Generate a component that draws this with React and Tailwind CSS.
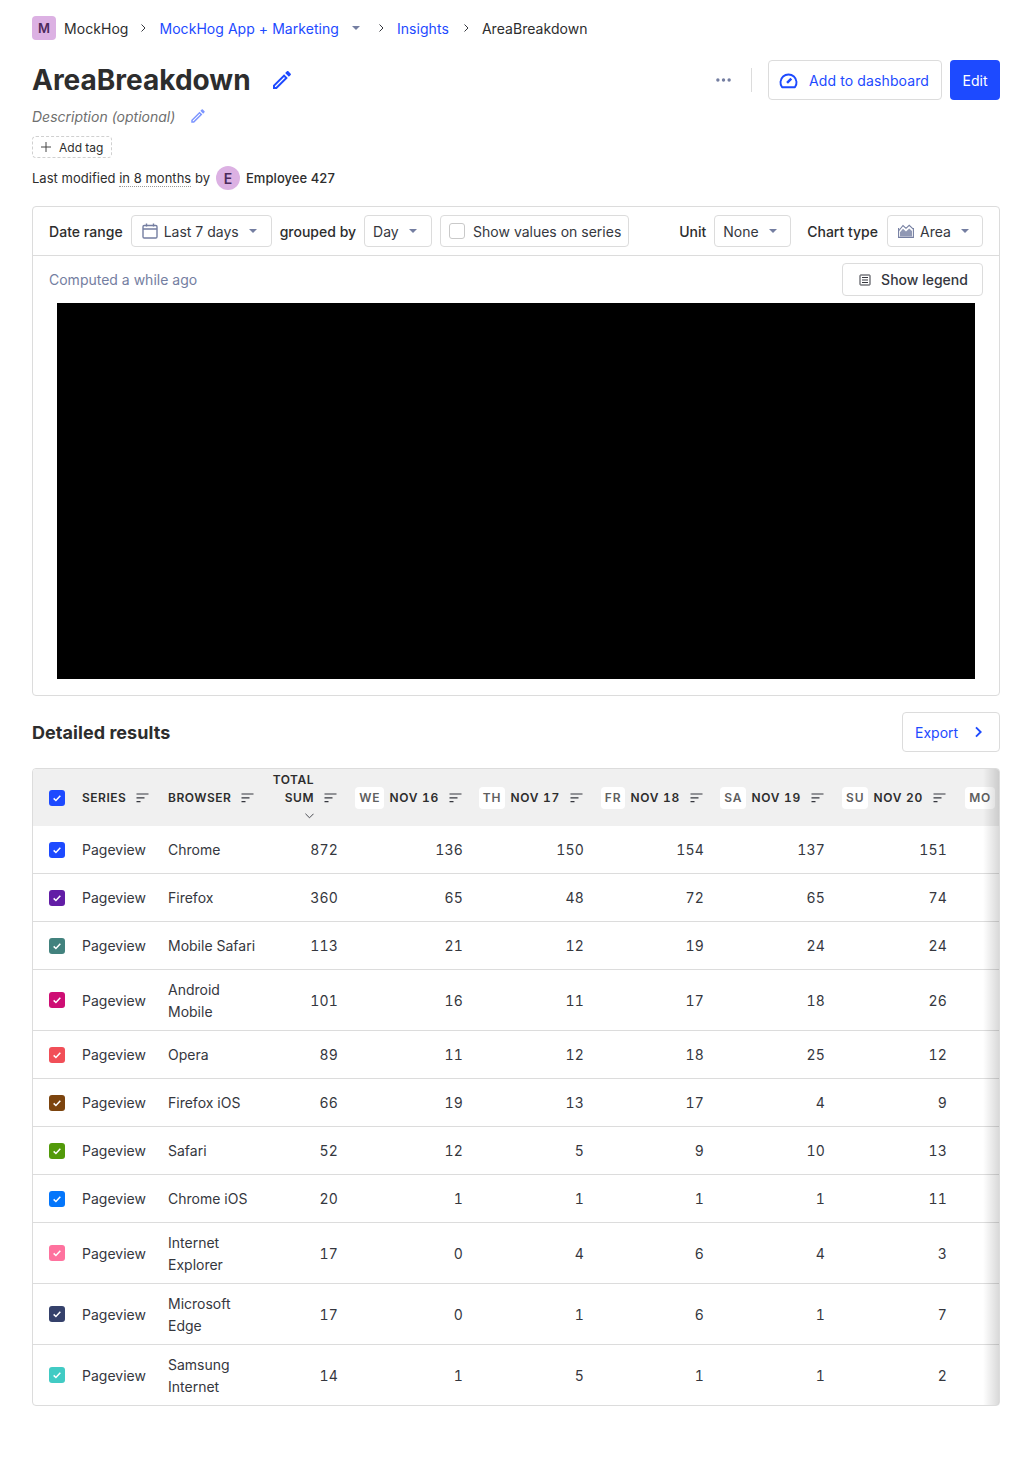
import React from "react";

const seriesRows = [
  { color: "bg-[#1d4aff]", browser: "Chrome", total: 872, days: [136, 150, 154, 137, 151], h: "h-[48px]" },
  { color: "bg-[#621da6]", browser: "Firefox", total: 360, days: [65, 48, 72, 65, 74], h: "h-[48px]" },
  { color: "bg-[#42827e]", browser: "Mobile Safari", total: 113, days: [21, 12, 19, 24, 24], h: "h-[48px]" },
  { color: "bg-[#ce0e74]", browser: "Android Mobile", total: 101, days: [16, 11, 17, 18, 26], h: "h-[61px]", tall: true },
  { color: "bg-[#f14f58]", browser: "Opera", total: 89, days: [11, 12, 18, 25, 12], h: "h-[48px]" },
  { color: "bg-[#7c440e]", browser: "Firefox iOS", total: 66, days: [19, 13, 17, 4, 9], h: "h-[48px]" },
  { color: "bg-[#529a0a]", browser: "Safari", total: 52, days: [12, 5, 9, 10, 13], h: "h-[48px]" },
  { color: "bg-[#0476fb]", browser: "Chrome iOS", total: 20, days: [1, 1, 1, 1, 11], h: "h-[48px]" },
  { color: "bg-[#fe729e]", browser: "Internet Explorer", total: 17, days: [0, 4, 6, 4, 3], h: "h-[61px]", tall: true },
  { color: "bg-[#35416b]", browser: "Microsoft Edge", total: 17, days: [0, 1, 6, 1, 7], h: "h-[61px]", tall: true },
  { color: "bg-[#41cbc4]", browser: "Samsung Internet", total: 14, days: [1, 5, 1, 1, 2], h: "h-[60px]", tall: true },
];

const dayColumns = [
  { day: "WE", date: "NOV 16" },
  { day: "TH", date: "NOV 17" },
  { day: "FR", date: "NOV 18" },
  { day: "SA", date: "NOV 19" },
  { day: "SU", date: "NOV 20" },
];

function Pencil({ className }) {
  return (
    <svg viewBox="0 0 24 24" fill="currentColor" className={className}>
      <path d="M14.06 9.02l.92.92L5.92 19H5v-.92l9.06-9.06M17.66 3c-.25 0-.51.1-.7.29l-1.83 1.83 3.75 3.75 1.83-1.83c.39-.39.39-1.02 0-1.41l-2.34-2.34c-.2-.2-.45-.29-.71-.29zm-3.6 3.19L3 17.25V21h3.75L17.81 9.94l-3.75-3.75z" />
    </svg>
  );
}

function Caret({ className = "" }) {
  return (
    <svg viewBox="0 0 10 5" fill="currentColor" className={`w-[8px] h-[4px] text-[#747ea1] ${className}`}>
      <path d="M0 0h10L5 5z" />
    </svg>
  );
}

function Chevron({ className, width = 2 }) {
  return (
    <svg viewBox="0 0 24 24" fill="none" stroke="currentColor" strokeWidth={width} className={className}>
      <path d="M9 5l7 7-7 7" />
    </svg>
  );
}

function SortIcon() {
  return (
    <svg viewBox="0 0 13 10" fill="none" stroke="#35373e" strokeWidth="1.2" className="w-[13px] h-[10px] shrink-0">
      <path d="M0.5 1h12M0.5 4.8h8M0.5 8.6h4" />
    </svg>
  );
}

function CheckBox({ color }) {
  return (
    <span className={`w-[16px] h-[16px] rounded-[3px] flex items-center justify-center ${color}`}>
      <svg viewBox="0 0 12 12" fill="none" stroke="white" strokeWidth="1.8" className="w-[10px] h-[10px]">
        <path d="M2 6.5l2.7 2.5L10 3.4" />
      </svg>
    </span>
  );
}

function DayHeader({ day, date }) {
  return (
    <div className="flex items-center justify-end">
      <span className="bg-white rounded-[4px] h-[22px] px-[4px] flex items-center text-[#5f5f5f] mr-[5px] tracking-[0.9px]">{day}</span>
      <span className="whitespace-nowrap tabular-nums tracking-[0.7px]">{date}</span>
      <span className="ml-[10px] mr-[1px]"><SortIcon /></span>
    </div>
  );
}

function SelectBox({ children, className = "" }) {
  return (
    <div className={`h-[32px] border border-[#dcdcdc] rounded-[4px] flex items-center text-[14px] tracking-normal text-[#35373e] ${className}`}>
      {children}
    </div>
  );
}

export default function App() {
  return (
    <div className="w-[1032px] h-[1470px] px-[32px] pt-[16px] bg-white text-[#2d2d2d] font-['Inter',sans-serif]">
      <div className="h-[24px] flex items-center text-[14px] tracking-[0.05px]">
        <span className="w-[24px] h-[24px] rounded-[4px] bg-[#dcb1e3] text-[#4c2a5c] font-semibold text-[13px] pt-px flex items-center justify-center">M</span>
        <span className="ml-[8px]">MockHog</span>
        <Chevron className="w-[12px] h-[12px] ml-[9px] text-[#35373e]" />
        <span className="ml-[10px] text-[#1d4aff]">MockHog App + Marketing</span>
        <Caret className="ml-[13px]" />
        <Chevron className="w-[12px] h-[12px] ml-[15px] text-[#35373e]" />
        <span className="ml-[10px] text-[#1d4aff]">Insights</span>
        <Chevron className="w-[12px] h-[12px] ml-[11px] text-[#35373e]" />
        <span className="ml-[10px]">AreaBreakdown</span>
      </div>

      <div className="mt-[20px] h-[40px] flex items-center">
        <h1 className="text-[28px] font-bold leading-[40px]">AreaBreakdown</h1>
        <Pencil className="w-[24px] h-[24px] ml-[19px] text-[#1d4aff]" />
        <div className="ml-auto flex items-center">
          <svg viewBox="0 0 16 4" fill="#747ea1" className="w-[15px] h-[4px]">
            <circle cx="2" cy="2" r="1.8" /><circle cx="8" cy="2" r="1.8" /><circle cx="14" cy="2" r="1.8" />
          </svg>
          <div className="w-px h-[24px] bg-[#dcdcdc] ml-[20px] mr-[16px]" />
          <button className="h-[40px] w-[174px] pr-[2px] border border-[#dcdcdc] rounded-[4px] flex items-center justify-center text-[14px] tracking-[0.12px] text-[#1d4aff]">
            <svg viewBox="0 0 20 18" fill="none" stroke="#1d4aff" strokeWidth="2" className="w-[19px] h-[17px] mr-[11px]">
              <path d="M3.2 16.2h13.6a8.5 8.5 0 1 0-13.6 0z" strokeLinejoin="round" />
              <path d="M8.5 11.5l4.5-4.5" strokeWidth="2.6" />
            </svg>
            Add to dashboard
          </button>
          <button className="h-[40px] w-[50px] ml-[8px] bg-[#1d4aff] rounded-[4px] text-white text-[14px]">Edit</button>
        </div>
      </div>

      <div className="mt-[5px] h-[22px] flex items-center">
        <span className="text-[14px] italic text-[#6f6f6f]">Description (optional)</span>
        <Pencil className="w-[18px] h-[18px] ml-[14px] text-[#7d96ff]" />
      </div>

      <div className="mt-[9px] w-[80px] h-[22px] border border-dashed border-[#d0d0d0] rounded-[4px] flex items-center text-[12px]">
        <svg viewBox="0 0 10 10" fill="none" stroke="#444" strokeWidth="1" className="w-[10px] h-[10px] ml-[8px] mr-[8px]">
          <path d="M5 0v10M0 5h10" />
        </svg>
        <span className="pt-px">Add tag</span>
      </div>

      <div className="mt-[8px] h-[24px] flex items-center text-[13px] tracking-[0.02px]">
        <span className="pt-px">Last modified <span className="border-b border-dotted border-[#999]">in 8 months</span> by</span>
        <span className="ml-[6px] w-[24px] h-[24px] rounded-full bg-[#dcb1e3] text-[#4c2a5c] font-semibold text-[14px] flex items-center justify-center">E</span>
        <span className="ml-[6px] pt-px font-medium tracking-[0.06px]">Employee 427</span>
      </div>

      <div className="mt-[16px] h-[490px] border border-[#dcdcdc] rounded-[4px]">
        <div className="h-[49px] px-[16px] flex items-center border-b border-[#dcdcdc] text-[14px] font-medium">
          <span className="tracking-[0.04px]">Date range</span>
          <SelectBox className="ml-[8px] w-[141px] pl-[10px] font-normal">
            <svg viewBox="0 0 16 16" fill="none" stroke="#747ea1" strokeWidth="1.4" className="w-[16px] h-[16px] mr-[6px]">
              <rect x="1" y="2.5" width="14" height="12.5" rx="1.2" /><path d="M1 6h14M4.5 0.5v3M11.5 0.5v3" />
            </svg>
            Last 7 days
            <Caret className="ml-[10px]" />
          </SelectBox>
          <span className="ml-[8px]">grouped by</span>
          <SelectBox className="ml-[8px] w-[68px] pl-[8px] font-normal">
            Day
            <Caret className="ml-[10px]" />
          </SelectBox>
          <SelectBox className="ml-[8px] w-[189px] pl-[8px] font-normal">
            <span className="w-[16px] h-[16px] border border-[#c9c9c9] rounded-[3px] mr-[8px]" />
            Show values on series
          </SelectBox>
          <span className="ml-auto">Unit</span>
          <SelectBox className="ml-[8px] w-[77px] pl-[8px] font-normal">
            None
            <Caret className="ml-[10px]" />
          </SelectBox>
          <span className="ml-[16px]">Chart type</span>
          <SelectBox className="ml-[9px] w-[96px] pl-[10px] font-normal">
            <svg viewBox="0 0 16 14" fill="none" stroke="#747ea1" strokeWidth="1.1" className="w-[16px] h-[14px] mr-[6px]">
              <path d="M0.6 4v9.4h14.8V4" />
              <path d="M1 6.5L5 1.5l3 2.8 3.2-3L15 4.8" />
              <path d="M2 12.5V8.2l3-3.4 3 2.8 3.2-3 2.8 2.3v5.6z" fill="#747ea1" fillOpacity="0.8" stroke="none" />
            </svg>
            Area
            <Caret className="ml-[10px]" />
          </SelectBox>
        </div>

        <div className="h-[47px] pl-[16px] pr-[16px] flex items-center justify-between">
          <span className="text-[14px] text-[#747ea1]">Computed a while ago</span>
          <button className="w-[141px] h-[33px] pl-[2px] border border-[#dcdcdc] rounded-[4px] flex items-center justify-center text-[14px] font-medium text-[#35373e]">
            <svg viewBox="0 0 12 12" fill="none" stroke="#35373e" strokeWidth="1" className="w-[12px] h-[12px] mr-[10px]">
              <rect x="1" y="1" width="10" height="10" rx="0.5" /><path d="M3 3.5h6M3 6h6M3 8.5h6" />
            </svg>
            Show legend
          </button>
        </div>

        <div className="mx-[24px] h-[376px] bg-black" />
      </div>

      <div className="mt-[16px] h-[40px] flex items-center justify-between">
        <h2 className="text-[18px] font-bold tracking-[0.05px]">Detailed results</h2>
        <button className="w-[98px] h-[40px] border border-[#dcdcdc] rounded-[4px] flex items-center text-[14px] text-[#1d4aff] pl-[12px]">
          Export
          <Chevron width={2.8} className="w-[16px] h-[16px] ml-[12px]" />
        </button>
      </div>

      <div className="relative mt-[16px] border border-[#dcdcdc] rounded-[4px] overflow-hidden">
        <table className="table-fixed w-[1030px] border-separate border-spacing-0 text-[14px] leading-[22px] text-[#35373e]">
          <colgroup>
            <col className="w-[41px]" />
            <col className="w-[86px]" />
            <col className="w-[100px]" />
            <col className="w-[86px]" />
            <col className="w-[125px]" />
            <col className="w-[121px]" />
            <col className="w-[120px]" />
            <col className="w-[121px]" />
            <col className="w-[122px]" />
            <col className="w-[108px]" />
          </colgroup>
          <thead>
            <tr className="h-[57px] bg-[#f0f0f0] text-[12px] font-semibold tracking-[0.5px] text-[#2d2d2d]">
              <th className="pl-[16px] font-semibold"><CheckBox color="bg-[#1d4aff]" /></th>
              <th className="pl-[8px] font-semibold text-left">
                <div className="flex items-center">SERIES<span className="ml-[10px]"><SortIcon /></span></div>
              </th>
              <th className="pl-[8px] font-semibold text-left">
                <div className="flex items-center">BROWSER<span className="ml-[10px]"><SortIcon /></span></div>
              </th>
              <th className="pr-[8px] font-semibold">
                <div className="flex items-center justify-end pr-[1px]">
                  <span className="text-right leading-[18px]">TOTAL<br />SUM</span>
                  <span className="ml-[10px] mt-[18px]"><SortIcon /></span>
                </div>
                <div className="flex items-center justify-end pr-[24px] h-[17px]">
                  <svg viewBox="0 0 10 6" fill="none" stroke="#35373e" strokeWidth="1" className="w-[9px] h-[6px]">
                    <path d="M0.5 0.5L5 5l4.5-4.5" />
                  </svg>
                </div>
              </th>
              {dayColumns.map((col) => (
                <th key={col.day} className="pr-[8px] font-semibold">
                  <DayHeader day={col.day} date={col.date} />
                </th>
              ))}
              <th className="pl-[10px] font-semibold text-left">
                <span className="bg-white rounded-[4px] h-[22px] w-[30px] flex items-center justify-center text-[#5f5f5f]">MO</span>
              </th>
            </tr>
          </thead>
          <tbody>
            {seriesRows.map((row, i) => {
              const line = i === seriesRows.length - 1 ? "" : "border-b border-[#dcdcdc]";
              const nudge = row.tall ? "pt-[2px]" : "";
              return (
                <tr key={row.browser} className={row.h}>
                  <td className={`pl-[16px] ${line}`}><CheckBox color={row.color} /></td>
                  <td className={`pl-[8px] ${nudge} ${line}`}>Pageview</td>
                  <td className={`pl-[8px] pr-[4px] ${nudge} ${line}`}>{row.browser}</td>
                  <td className={`pr-[8px] text-right tabular-nums tracking-[0.2px] ${nudge} ${line}`}>{row.total}</td>
                  {row.days.map((n, j) => (
                    <td key={j} className={`pr-[8px] text-right tabular-nums tracking-[0.2px] ${nudge} ${line}`}>{n}</td>
                  ))}
                  <td className={line} />
                </tr>
              );
            })}
          </tbody>
        </table>
        <div className="absolute top-0 bottom-0 right-0 w-[16px] bg-gradient-to-l from-[#00000026] to-transparent" />
      </div>
    </div>
  );
}
